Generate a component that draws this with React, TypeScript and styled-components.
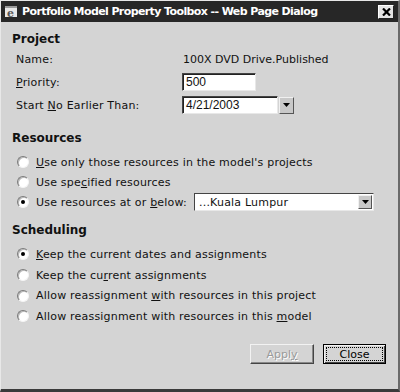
import React from "react";
import styled, { createGlobalStyle } from "styled-components";

const Global = createGlobalStyle`
  html, body { margin: 0; padding: 0; background: #d4d4d4; }
  body { font-family: "DejaVu Sans", Verdana, sans-serif; }
`;

const Window = styled.div`
  width: 400px;
  height: 392px;
  box-sizing: border-box;
  background: #d4d4d4;
  border-left: 1px solid #e8e8e8;
  border-top: 1px solid #e8e8e8;
  border-right: 2px solid #6a6a6a;
  border-bottom: 3px solid #3a3a3a;
  display: flex;
  flex-direction: column;
  overflow: hidden;
`;

const TitleBar = styled.div`
  height: 21px;
  background: #272727;
  display: flex;
  align-items: center;
  padding: 0 4px 0 3px;
  gap: 3px;
`;

const TitleText = styled.div`
  flex: 1;
  color: #fff;
  font-weight: bold;
  font-size: 11px;
  letter-spacing: -0.6px;
  white-space: nowrap;
`;

const CloseBox = styled.div`
  width: 16px;
  height: 14px;
  background: #e4e4e4;
  border-top: 1px solid #fff;
  border-left: 1px solid #fff;
  border-right: 1px solid #222;
  border-bottom: 1px solid #222;
  display: flex;
  align-items: center;
  justify-content: center;
  box-sizing: border-box;
`;

const Body = styled.div`
  flex: 1;
  display: flex;
  flex-direction: column;
  padding: 9px 0 0 11px;
  font-size: 11px;
  letter-spacing: 0.2px;
  color: #111;
`;

const SectionTitle = styled.div<{ $mt?: number }>`
  font-weight: bold;
  font-size: 12px;
  letter-spacing: 0;
  margin-top: ${(p) => p.$mt ?? 0}px;
  height: 16px;
  line-height: 16px;
`;

const FieldGrid = styled.div`
  display: grid;
  grid-template-columns: 166px auto;
  grid-auto-rows: 22px;
  row-gap: 1px;
  margin-top: 1px;
  padding-left: 4px;
  align-items: center;
`;

const Label = styled.span``;

const Value = styled.span`
  padding-left: 1px;
  letter-spacing: 0;
`;

const TextInput = styled.div<{ $w: number }>`
  width: ${(p) => p.$w}px;
  height: 18px;
  box-sizing: border-box;
  background: #fff;
  border-top: 1px solid #444;
  border-left: 1px solid #444;
  border-right: 1px solid #e8e8e8;
  border-bottom: 1px solid #e8e8e8;
  box-shadow: inset 1px 1px 0 #222;
  padding: 1px 3px;
  line-height: 14px;
  font-family: "Liberation Sans", Arial, sans-serif;
  font-size: 12px;
  letter-spacing: 0;
`;

const DateRow = styled.div`
  display: flex;
  align-items: center;
  gap: 1px;
`;

const ArrowButton = styled.div`
  width: 15px;
  height: 17px;
  box-sizing: border-box;
  background: #c8c8c8;
  border-top: 1px solid #f0f0f0;
  border-left: 1px solid #f0f0f0;
  border-right: 1px solid #555;
  border-bottom: 1px solid #555;
  display: flex;
  align-items: center;
  justify-content: center;
`;

const RadioList = styled.div`
  display: flex;
  flex-direction: column;
  margin-top: 6px;
  padding-left: 5px;
`;

const RadioRow = styled.div<{ $h: number }>`
  height: ${(p) => p.$h}px;
  display: flex;
  align-items: center;
  gap: 7px;
`;

const RadioCircle = styled.span<{ $on?: boolean }>`
  width: 12px;
  height: 12px;
  box-sizing: border-box;
  border-radius: 50%;
  background: #fff;
  border: 1px solid;
  border-color: #7a7a7a #f4f4f4 #f4f4f4 #7a7a7a;
  box-shadow: inset 1px 1px 0 #b8b8b8;
  display: flex;
  align-items: center;
  justify-content: center;
  &::after {
    content: "";
    width: 4px;
    height: 4px;
    border-radius: 50%;
    background: ${(p) => (p.$on ? "#000" : "transparent")};
  }
`;

const Select = styled.div`
  margin-left: 0;
  width: 180px;
  height: 18px;
  box-sizing: border-box;
  background: #fff;
  border-top: 1px solid #444;
  border-left: 1px solid #444;
  border-right: 1px solid #e8e8e8;
  border-bottom: 1px solid #e8e8e8;
  display: flex;
  align-items: center;
  padding-left: 4px;
  padding-right: 1px;
  font-size: 11px;
`;

const SelectText = styled.span`
  flex: 1;
`;

const SmallArrow = styled(ArrowButton)`
  width: 14px;
  height: 14px;
`;

const Footer = styled.div`
  display: flex;
  justify-content: flex-end;
  gap: 9px;
  margin-top: auto;
  margin-bottom: 25px;
  padding-right: 12px;
`;

const Button = styled.div<{ $primary?: boolean; $disabled?: boolean }>`
  width: ${(p) => (p.$primary ? 63 : 64)}px;
  height: 20px;
  box-sizing: border-box;
  background: #d4d4d4;
  border: 1px solid;
  border-color: ${(p) => (p.$primary ? "#000" : "#f2f2f2 #444 #444 #f2f2f2")};
  box-shadow: ${(p) =>
    p.$primary
      ? "inset 1px 1px 0 #f2f2f2, inset -1px -1px 0 #444"
      : "inset -1px -1px 0 #888"};
  display: flex;
  align-items: center;
  justify-content: center;
  font-size: 11px;
  letter-spacing: 0;
  color: ${(p) => (p.$disabled ? "#9a9a9a" : "#000")};
  text-shadow: ${(p) => (p.$disabled ? "1px 1px 0 #fff" : "none")};
  padding: 2px;
`;

const Focus = styled.span`
  flex: 1;
  align-self: stretch;
  border: 1px dotted #000;
  display: flex;
  align-items: center;
  justify-content: center;
`;

const U = styled.span`
  text-decoration: underline;
`;

const IEIcon = () => (
  <svg width="15" height="15" viewBox="0 0 15 15">
    <rect x="1" y="2" width="12" height="11" fill="#e8e8e8" />
    <rect x="1" y="2" width="12" height="2" fill="#9a9a9a" />
    <text x="3" y="13" fontSize="11" fontWeight="bold" fill="#555" fontFamily="DejaVu Serif">e</text>
  </svg>
);

const XIcon = () => (
  <svg width="9" height="8" viewBox="0 0 9 8">
    <path d="M1 0.5 L8 7.5 M8 0.5 L1 7.5" stroke="#000" strokeWidth="2.2" />
  </svg>
);

const DownTri = () => (
  <svg width="7" height="4" viewBox="0 0 7 4">
    <path d="M0 0 H7 L3.5 4 Z" fill="#000" />
  </svg>
);

export default function App() {
  return (
    <>
      <Global />
      <Window>
        <TitleBar>
          <IEIcon />
          <TitleText>Portfolio Model Property Toolbox -- Web Page Dialog</TitleText>
          <CloseBox>
            <XIcon />
          </CloseBox>
        </TitleBar>
        <Body>
          <SectionTitle $mt={0}>Project</SectionTitle>
          <FieldGrid>
            <Label>Name:</Label>
            <Value>100X DVD Drive.Published</Value>
            <Label>
              <U>P</U>riority:
            </Label>
            <TextInput $w={74}>500</TextInput>
            <Label>
              Start <U>N</U>o Earlier Than:
            </Label>
            <DateRow>
              <TextInput $w={96}>4/21/2003</TextInput>
              <ArrowButton>
                <DownTri />
              </ArrowButton>
            </DateRow>
          </FieldGrid>
          <SectionTitle $mt={14}>Resources</SectionTitle>
          <RadioList>
            <RadioRow $h={20}>
              <RadioCircle />
              <span>
                <U>U</U>se only those resources in the model's projects
              </span>
            </RadioRow>
            <RadioRow $h={20}>
              <RadioCircle />
              <span>
                Use spe<U>c</U>ified resources
              </span>
            </RadioRow>
            <RadioRow $h={20}>
              <RadioCircle $on />
              <span>
                Use resources at or <U>b</U>elow:
              </span>
              <Select>
                <SelectText>...Kuala Lumpur</SelectText>
                <SmallArrow>
                  <DownTri />
                </SmallArrow>
              </Select>
            </RadioRow>
          </RadioList>
          <SectionTitle $mt={10}>Scheduling</SectionTitle>
          <RadioList>
            <RadioRow $h={20.7}>
              <RadioCircle $on />
              <span>
                <U>K</U>eep the current dates and assignments
              </span>
            </RadioRow>
            <RadioRow $h={20.7}>
              <RadioCircle />
              <span>
                Keep the cu<U>r</U>rent assignments
              </span>
            </RadioRow>
            <RadioRow $h={20.7}>
              <RadioCircle />
              <span>
                Allow reassignment <U>w</U>ith resources in this project
              </span>
            </RadioRow>
            <RadioRow $h={20.7}>
              <RadioCircle />
              <span>
                Allow reassignment with resources in this <U>m</U>odel
              </span>
            </RadioRow>
          </RadioList>
          <Footer>
            <Button $disabled>
              Appl<U>y</U>
            </Button>
            <Button $primary>
              <Focus>Close</Focus>
            </Button>
          </Footer>
        </Body>
      </Window>
    </>
  );
}
